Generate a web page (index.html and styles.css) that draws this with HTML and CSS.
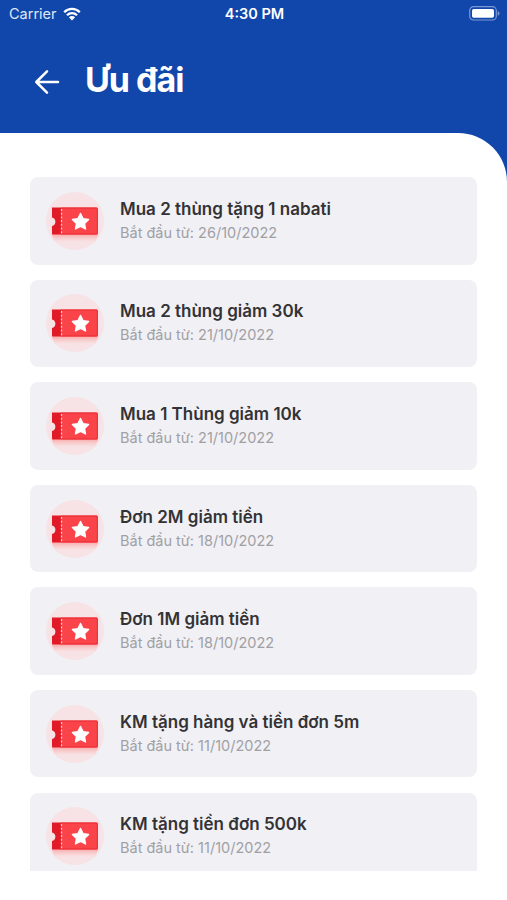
FILE: index.html
```html
<!DOCTYPE html>
<html lang="vi">
<head>
<meta charset="utf-8">
<title>Ưu đãi</title>
<link rel="stylesheet" href="styles.css">
</head>
<body>
<svg class="defs" aria-hidden="true">
  <defs>
    <linearGradient id="glow" x1="0" y1="0" x2="0" y2="1">
      <stop offset="0" stop-color="#fb9090" stop-opacity=".85"/>
      <stop offset="1" stop-color="#fbb5b5" stop-opacity="0"/>
    </linearGradient>
    <symbol id="voucher" viewBox="0 0 60 60">
      <circle cx="30" cy="30" r="29" fill="#f7e3e5"/>
      <path d="M7 42h46v2l-3 7H10l-3-7z" fill="url(#glow)"/>
      <path d="M7 16.5h9v27H8q-1 0-1-1V35a4.300 4.300 0 0 0 0-8.400z" fill="#e01b27"/>
      <path d="M16 16.500h35.500q1.300 0 1.300 1.300v24.400q0 1.300-1.300 1.300H16z" fill="#fb4449"/>
      <path d="M16 17h35.500q.8 0 .8.800v24.400q0 .800-.8.800H16" fill="none" stroke="#e82b34"/>
      <path d="M16.500 18v25" stroke="#ffc4c5" stroke-width="1.300" stroke-dasharray="2 1.700"/>
      <path d="M35.500 22.500l2.500 5.100 5.600.8-4.100 4 1 5.600-5-2.700-5 2.700 1-5.600-4.100-4 5.600-.8z" fill="#fff" stroke="#fff" stroke-width="1.400" stroke-linejoin="round"/>
    </symbol>
  </defs>
</svg>
<div class="screen">
  <div class="status">
    <div class="carrier"><span>Carrier</span>
      <svg class="wifi" viewBox="0 0 18 14"><path d="M1.200 5.200a11 11 0 0 1 15.600 0M4 8.200a7 7 0 0 1 10 0" fill="none" stroke="#fff" stroke-width="2.300"/><path d="M5.900 10.200a4.400 4.400 0 0 1 6.200 0L9 13.500z" fill="#fff"/></svg>
    </div>
    <time class="clock">4:30 PM</time>
    <svg class="battery" viewBox="0 0 31 15"><rect x=".7" y=".7" width="26.600" height="13.300" rx="3.800" fill="none" stroke="#7c98d2" stroke-width="1.200"/><rect x="3" y="3" width="22" height="8.800" rx="1.700" fill="#fff"/><path d="M28.700 5.100q1.800.7 1.800 2.300t-1.800 2.300z" fill="#7c98d2"/></svg>
  </div>
  <header class="header">
    <svg class="back" viewBox="0 0 26 26"><path d="M24 13H2.500M13 2.300L2.300 13 13 23.700" fill="none" stroke="#fff" stroke-width="2.500" stroke-linecap="round" stroke-linejoin="round"/></svg>
    <h1>Ưu đãi</h1>
  </header>
  <main class="panel">
    <div class="list">
      <article class="card"><svg class="icon"><use href="#voucher"/></svg><div><h2><span>Mua 2 thùng tặng 1 nabati</span></h2><p><span>Bắt đầu từ: 26/10/2022</span></p></div></article>
      <article class="card"><svg class="icon"><use href="#voucher"/></svg><div><h2><span>Mua 2 thùng giảm 30k</span></h2><p><span>Bắt đầu từ: 21/10/2022</span></p></div></article>
      <article class="card"><svg class="icon"><use href="#voucher"/></svg><div><h2><span>Mua 1 Thùng giảm 10k</span></h2><p><span>Bắt đầu từ: 21/10/2022</span></p></div></article>
      <article class="card"><svg class="icon"><use href="#voucher"/></svg><div><h2><span>Đơn 2M giảm tiền</span></h2><p><span>Bắt đầu từ: 18/10/2022</span></p></div></article>
      <article class="card"><svg class="icon"><use href="#voucher"/></svg><div><h2><span>Đơn 1M giảm tiền</span></h2><p><span>Bắt đầu từ: 18/10/2022</span></p></div></article>
      <article class="card"><svg class="icon"><use href="#voucher"/></svg><div><h2><span>KM tặng hàng và tiền đơn 5m</span></h2><p><span>Bắt đầu từ: 11/10/2022</span></p></div></article>
      <article class="card"><svg class="icon"><use href="#voucher"/></svg><div><h2><span>KM tặng tiền đơn 500k</span></h2><p><span>Bắt đầu từ: 11/10/2022</span></p></div></article>
    </div>
  </main>
</div>
</body>
</html>
```
FILE: styles.css
```css
* { box-sizing: border-box; margin: 0; }
body { font-family: Inter, "Liberation Sans", sans-serif; }
.defs { display: block; width: 0; height: 0; }
.screen {
  display: flex;
  flex-direction: column;
  width: 507px;
  height: 900px;
  overflow: hidden;
  background: #1147ab;
}
.status {
  display: grid;
  grid-template-columns: 1fr auto 1fr;
  align-items: center;
  height: 27px;
  padding: 0 7px 0 9px;
  color: #fff;
}
.carrier { display: flex; align-items: center; gap: 6px; font-size: 14.5px; color: #dfe8fa; }
.wifi { width: 18px; height: 14px; }
.clock { font-size: 14.5px; font-weight: 600; }
.battery { width: 31px; height: 15px; justify-self: end; }
.header {
  display: flex;
  align-items: center;
  gap: 25px;
  height: 106px;
  padding: 0 34px 0;
  color: #fff;
}
.back { width: 26px; height: 26px; margin-top: 3px; }
h1 { font-size: 34px; line-height: 40px; font-weight: 700; letter-spacing: -1px; }
.panel {
  flex: 1;
  min-height: 0;
  padding: 44px 30px 29.5px;
  background: #fff;
  border-top-right-radius: 49px;
}
.list {
  display: flex;
  flex-direction: column;
  gap: 15.1px;
  height: 100%;
  overflow: hidden;
}
.card {
  display: flex;
  flex: none;
  align-items: center;
  gap: 15px;
  height: 87.5px;
  padding-left: 15px;
  border-radius: 8px;
  background: #f1f0f5;
}
.icon { width: 60px; height: 60px; flex: none; }
h2 { font-size: 17px; line-height: 24px; font-weight: 600; color: #333336; white-space: nowrap; }
p { font-size: 14.5px; line-height: 24px; color: #a0a0a4; white-space: nowrap; }
```
